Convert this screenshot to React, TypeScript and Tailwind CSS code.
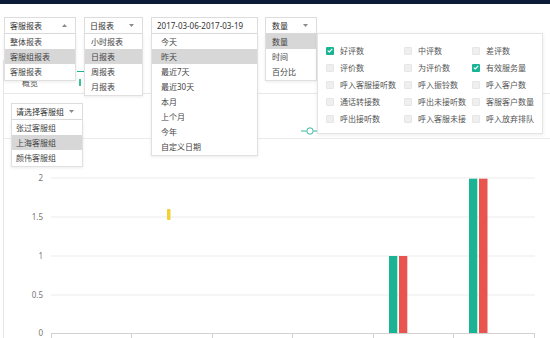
import React from 'react'

const FONT = { fontFamily: '"Noto Sans", "Noto Sans CJK SC", sans-serif' }

function Caret({ up = false }: { up?: boolean }) {
  return (
    <svg width="5" height="3" viewBox="0 0 5 3" className="shrink-0">
      {up ? <polygon points="0,3 5,3 2.5,0" fill="#8a8a8a" /> : <polygon points="0,0 5,0 2.5,3" fill="#8a8a8a" />}
    </svg>
  )
}

interface SelectProps {
  label: string
  options: string[]
  active: number
  width: string
  textPad: string
  itemPad: string
  caret?: 'up' | 'down'
  className?: string
}

function Select({ label, options, active, width, textPad, itemPad, caret, className = '' }: SelectProps) {
  return (
    <div className={`relative ${width} ${className}`}>
      <div className={`flex h-[17px] items-center justify-between border border-[#dcdcdc] bg-white pr-[8px] ${textPad} text-[8px] leading-none text-[#333]`}>
        <span>{label}</span>
        {caret && <Caret up={caret === 'up'} />}
      </div>
      <div className="absolute left-0 top-full z-20 w-full border border-t-0 border-[#e0e0e0] bg-white pb-[1px] shadow-[0_1px_3px_rgba(0,0,0,0.08)]">
        {options.map((o, i) => (
          <div
            key={o}
            className={`flex h-[15px] items-center ${itemPad} text-[8px] leading-none text-[#444] ${i === active ? 'bg-[#d7d7d7]' : ''}`}
          >
            {o}
          </div>
        ))}
      </div>
    </div>
  )
}

const metrics: [string, boolean][] = [
  ['好评数', true],
  ['中评数', false],
  ['差评数', false],
  ['评价数', false],
  ['为评价数', false],
  ['有效服务量', true],
  ['呼入客服接听数', false],
  ['呼入振铃数', false],
  ['呼入客户数', false],
  ['通话转接数', false],
  ['呼出未接听数', false],
  ['客服客户数量', false],
  ['呼出接听数', false],
  ['呼入客服未接', false],
  ['呼入放弃排队', false],
]

function Check({ on }: { on: boolean }) {
  if (on) {
    return (
      <span className="flex h-[8px] w-[8px] shrink-0 items-center justify-center rounded-[1px] bg-[#1ab394]">
        <svg width="6" height="5" viewBox="0 0 6 5">
          <path d="M0.7 2.6 L2.3 4 L5.3 0.9" fill="none" stroke="#fff" strokeWidth="1.2" />
        </svg>
      </span>
    )
  }
  return <span className="h-[8px] w-[8px] shrink-0 rounded-[1px] border border-[#e6e6e6] bg-[#efefef]" />
}

function Chart() {
  const gridY = [39, 78, 117, 156]
  const labels = [
    { y: 39, t: '2' },
    { y: 78, t: '1.5' },
    { y: 117, t: '1' },
    { y: 156, t: '0.5' },
    { y: 194, t: '0' },
  ]
  const ticks = [47, 127, 208, 288, 369, 449, 530]
  return (
    <svg width="546" height="199" viewBox="0 0 546 199" className="block">
      {gridY.map((y) => (
        <line key={y} x1="47" x2="531" y1={y} y2={y} stroke="#ebebeb" strokeWidth="1" />
      ))}
      <line x1="47" x2="531" y1="194.5" y2="194.5" stroke="#d2d2d2" strokeWidth="1" />
      {ticks.map((x) => (
        <line key={x} x1={x + 0.5} x2={x + 0.5} y1="194" y2="199" stroke="#d2d2d2" strokeWidth="1" />
      ))}
      {labels.map((l) => (
        <text key={l.t} x="39" y={l.y + 3} textAnchor="end" fontSize="8" fill="#777" style={FONT}>
          {l.t}
        </text>
      ))}
      <rect x="163" y="70" width="3.5" height="11" rx="1" fill="#f3d033" />
      <rect x="385" y="117" width="8.3" height="77" fill="#1ab394" />
      <rect x="395" y="117" width="8.3" height="77" fill="#e8554e" />
      <rect x="465" y="39.7" width="8.3" height="154.3" fill="#1ab394" />
      <rect x="475" y="39.7" width="8.5" height="154.3" fill="#e8554e" />
    </svg>
  )
}

export default function App() {
  return (
    <div className="relative h-[338px] w-[550px] overflow-hidden bg-white" style={FONT}>
      <div className="h-[4px] bg-[#0c1c38]" />

      {/* filter row */}
      <div className="relative z-30 flex pl-[4px] pt-[13px]">
        <Select
          label="客服报表"
          options={['整体报表', '客服组报表', '客服报表']}
          active={1}
          width="w-[72px]"
          textPad="pl-[5px]"
          itemPad="pl-[5px]"
          caret="up"
        />
        <Select
          label="日报表"
          options={['小时报表', '日报表', '周报表', '月报表']}
          active={1}
          width="w-[59px]"
          textPad="pl-[5px]"
          itemPad="pl-[6px]"
          caret="down"
          className="ml-[8px]"
        />
        <Select
          label="2017-03-06-2017-03-19"
          options={['今天', '昨天', '最近7天', '最近30天', '本月', '上个月', '今年', '自定义日期']}
          active={1}
          width="w-[107px]"
          textPad="pl-[5px]"
          itemPad="pl-[9px]"
          className="ml-[8px]"
        />
        <Select
          label="数量"
          options={['数量', '时间', '百分比']}
          active={0}
          width="w-[52px]"
          textPad="pl-[6px]"
          itemPad="pl-[6px]"
          caret="down"
          className="ml-[7px]"
        />
      </div>

      {/* metrics panel */}
      <div className="absolute left-[317px] top-[33px] z-30 h-[101px] w-[226px] border border-[#e4e4e4] bg-white pl-[8px] pt-[8px] shadow-[0_1px_4px_rgba(0,0,0,0.08)]">
        <div className="grid grid-cols-[78px_68px_1fr]">
          {metrics.map(([m, on]) => (
            <div key={m} className="flex h-[17px] items-center gap-[6px] text-[8px] leading-none text-[#555]">
              <Check on={on} />
              <span className="whitespace-nowrap">{m}</span>
            </div>
          ))}
        </div>
      </div>

      {/* tab indicator fragments */}
      <div className="absolute left-[77px] top-[71px] z-10 h-[1px] w-[7px] bg-[#1ab394]" />
      <div className="absolute left-[79px] top-[79px] z-10 h-[7px] w-[2px] bg-[#3fbf9a]" />

      {/* zoom handle */}
      <svg className="absolute left-[300px] top-[127px] z-10" width="17" height="8" viewBox="0 0 17 8">
        <line x1="1" x2="6.5" y1="4" y2="4" stroke="#37b6a4" strokeWidth="1" />
        <circle cx="10" cy="4" r="3.2" fill="#fff" stroke="#37b6a4" strokeWidth="1" />
        <line x1="13.5" x2="17" y1="4" y2="4" stroke="#37b6a4" strokeWidth="1" />
      </svg>

      {/* content panel */}
      <div className="ml-[3px] mt-[26px] border-l border-[#e6e6e6]">
        <div className="box-content flex h-[33px] items-end border-b border-[#e8e8e8] pb-0 pl-[18px]">
          <span className="mb-[5px] text-[8px] leading-[10px] text-[#555]">概览</span>
        </div>
        <div className="relative z-20 box-content h-[44px] border-b border-[#ebebeb] pl-[7px] pt-0">
          <div className="pt-[9px]">
            <Select
              label="请选择客服组"
              options={['张过客服组', '上海客服组', '颜伟客服组']}
              active={1}
              width="w-[72px]"
              textPad="pl-[4px]"
              itemPad="pl-[4px]"
              caret="down"
            />
          </div>
        </div>
        <Chart />
      </div>
    </div>
  )
}
